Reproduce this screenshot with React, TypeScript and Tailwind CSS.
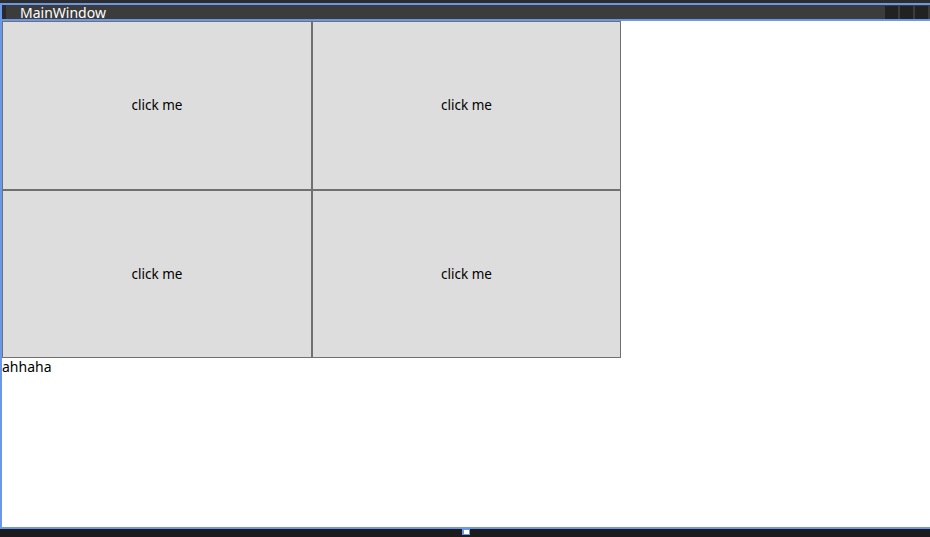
export default function App() {
  const cells = ["click me", "click me", "click me", "click me"];
  return (
    <div
      className="w-[930px] h-[537px] bg-[#1c1c1c] flex flex-col overflow-hidden"
      style={{ fontFamily: '"Noto Sans", "Open Sans", sans-serif' }}
    >
      <div className="h-[3px] bg-[#2d2d2d] shrink-0" />
      <div className="flex-1 flex flex-col border-l-2 border-[#6a97e8] bg-white min-h-0">
        <div className="h-[14px] shrink-0 bg-[#3c3c3c] border-t-2 border-b-2 border-[#6a97e8] flex items-center box-content">
          <div className="w-[4px] h-full bg-[#2a2a2a]" />
          <span className="ml-[14px] text-white text-[14px] leading-none mt-[2px]">MainWindow</span>
          <div className="ml-auto flex gap-[2px] pr-[2px]">
            <div className="w-[13px] h-[13px] bg-[#222222]" />
            <div className="w-[13px] h-[13px] bg-[#222222]" />
            <div className="w-[13px] h-[13px] bg-[#222222]" />
          </div>
        </div>
        <div className="flex-1 bg-white min-h-0">
          <div className="grid grid-cols-[310px_309px] grid-rows-[169px_168px] w-[619px]">
            {cells.map((c, i) => (
              <button
                key={i}
                className="bg-[#dddddd] border border-[#707070] text-[13.5px] text-black flex items-center justify-center"
              >
                {c}
              </button>
            ))}
          </div>
          <div className="text-[14px] text-black leading-[18px]">ahhaha</div>
        </div>
      </div>
      <div className="h-[2px] bg-[#6a97e8] shrink-0" />
      <div className="h-[8px] shrink-0 relative">
        <div className="absolute left-[462px] top-0 w-[8px] h-[6px] bg-[#6a97e8] flex items-center justify-center">
          <div className="w-[5px] h-[4px] bg-white" />
        </div>
      </div>
    </div>
  );
}
